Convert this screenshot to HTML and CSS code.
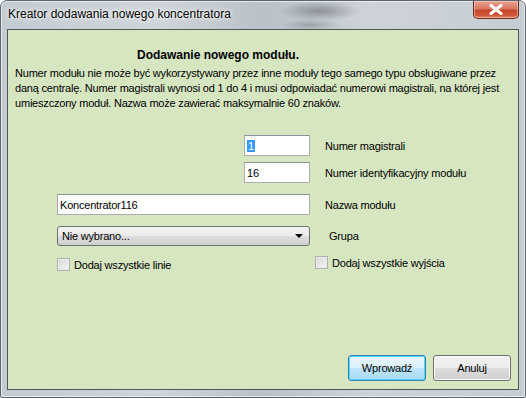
FILE: index.html
```html
<!DOCTYPE html>
<html lang="pl">
  <head>
    <meta charset="UTF-8" />
    <title>Kreator dodawania nowego koncentratora</title>
    <link rel="stylesheet" href="styles.css">
  </head>
  <body>
    <div class="window">
      <!-- Pasek tytułu -->
      <div class="titlebar">
        <span class="title">Kreator dodawania nowego koncentratora</span>
        <div class="close-btn">
          <svg width="14" height="11" viewBox="0 0 14 11">
            <path d="M2 1.5 L12 9.5 M12 1.5 L2 9.5" stroke="#fff" stroke-width="3" stroke-linecap="round" />
          </svg>
        </div>
      </div>

      <!-- Obszar klienta -->
      <div class="client">
        <h1 class="heading">Dodawanie nowego modułu.</h1>
        <p class="info">
          Numer modułu nie może być wykorzystywany przez inne moduły tego samego typu obsługiwane przez
          daną centralę. Numer magistrali wynosi od 1 do 4 i musi odpowiadać numerowi magistrali, na której jest
          umieszczony moduł. Nazwa może zawierać maksymalnie 60 znaków.
        </p>

        <div class="row row-first">
          <div class="field field-short"><span class="selected">1</span></div>
          <span class="label">Numer magistrali</span>
        </div>
        <div class="row">
          <div class="field field-short">16</div>
          <span class="label">Numer identyfikacyjny modułu</span>
        </div>
        <div class="row row-name">
          <div class="field field-long">Koncentrator116</div>
          <span class="label">Nazwa modułu</span>
        </div>
        <div class="row row-group">
          <div class="combo">
            <span>Nie wybrano...</span>
            <span class="arrow"></span>
          </div>
          <span class="label label-group">Grupa</span>
        </div>

        <div class="checks">
          <label class="check check-left"><span class="box"></span>Dodaj wszystkie linie</label>
          <label class="check"><span class="box"></span>Dodaj wszystkie wyjścia</label>
        </div>

        <div class="buttons">
          <button class="btn btn-default">Wprowadź</button>
          <button class="btn">Anuluj</button>
        </div>
      </div>
    </div>
  </body>
</html>
```

FILE: styles.css
```css
* {
  margin: 0;
  padding: 0;
  box-sizing: border-box;
}

body {
  width: 526px;
  height: 398px;
  overflow: hidden;
  background: #fff;
  font-family: "Liberation Sans", Arial, sans-serif;
  font-size: 11px;
  letter-spacing: -0.2px;
  color: #000;
}

/* Ramka okna w stylu Windows 7 (rozmyte tło szkła) */
.window {
  width: 526px;
  height: 398px;
  display: flex;
  flex-direction: column;
  padding: 0 6px 7px 6px;
  border: 1px solid #5d666e;
  border-radius: 7px 7px 2px 2px;
  background:
    radial-gradient(ellipse 40px 10px at 318px 10px, rgba(70, 75, 80, 0.45), transparent),
    radial-gradient(ellipse 30px 6px at 310px 24px, rgba(70, 75, 80, 0.3), transparent),
    linear-gradient(to right, #c3cbd2 0%, #cfd5da 30%, #b9c1c8 50%, #cdd3d8 70%, #c6cdd3 100%);
  box-shadow: inset 0 0 0 1px #e6eaee;
}

.titlebar {
  height: 28px;
  display: flex;
  align-items: flex-start;
  justify-content: space-between;
}

.title {
  font-size: 12px;
  letter-spacing: 0;
  margin: 6px 0 0 1px;
  text-shadow: 0 0 6px #fff, 0 0 3px #fff;
}

.close-btn {
  width: 46px;
  height: 18px;
  display: flex;
  align-items: center;
  justify-content: center;
  border: 1px solid #6b2a1e;
  border-top: none;
  border-radius: 0 0 5px 5px;
  background: linear-gradient(to bottom, #e8a493 0%, #d7775f 45%, #c6452b 55%, #d2583a 85%, #e48c6a 100%);
  box-shadow: inset 0 0 0 1px rgba(255, 220, 210, 0.5);
}

/* Zielony obszar z treścią */
.client {
  flex: 1;
  display: flex;
  flex-direction: column;
  background: #d6e6c0;
  border: 1px solid #4e565c;
  padding: 0 7px 8px 7px;
}

.heading {
  font-size: 12px;
  font-weight: bold;
  letter-spacing: 0;
  margin: 18px 0 0 122px;
  line-height: 14px;
}

.info {
  margin-top: 4px;
  line-height: 15px;
}

.row {
  display: flex;
  align-items: center;
  padding-left: 42px;
  margin-top: 6px;
}

.row-first {
  margin-top: 24px;
}

.row-name {
  margin-top: 11px;
}

.row-group {
  margin-top: 11px;
}

.field {
  height: 21px;
  background: #fff;
  border: 1px solid #abadb3;
  border-top-color: #8e9197;
  padding: 3px 2px;
  font-size: 11px;
  line-height: 14px;
}

.field-short {
  width: 66px;
  margin-left: 187px;
}

.field-long {
  width: 253px;
}

.selected {
  background: #3399ff;
  color: #fff;
  padding: 0 1px;
}

.label {
  margin-left: 15px;
}

.label-group {
  margin-left: 19px;
}

/* Lista rozwijana */
.combo {
  width: 253px;
  height: 20px;
  display: flex;
  align-items: center;
  justify-content: space-between;
  padding: 0 6px 0 4px;
  border: 1px solid #707070;
  border-radius: 3px;
  background: linear-gradient(to bottom, #f2f2f2 0%, #ebebeb 50%, #dddddd 51%, #cfcfcf 100%);
  font-size: 11px;
}

.arrow {
  width: 0;
  height: 0;
  border-left: 4px solid transparent;
  border-right: 4px solid transparent;
  border-top: 4px solid #000;
}

/* Pola wyboru */
.checks {
  display: flex;
  align-items: flex-start;
  padding-left: 42px;
  margin-top: 10px;
}

.check {
  display: flex;
  align-items: center;
  gap: 4px;
}

.check-left {
  width: 258px;
  margin-top: 2px;
}

.box {
  width: 13px;
  height: 13px;
  border: 1px solid #b1b1b1;
  background: linear-gradient(135deg, #d8d8d8 0%, #f4f4f4 100%);
  box-shadow: inset 0 0 0 1px #eaeaea;
}

/* Przyciski */
.buttons {
  margin-top: auto;
  display: flex;
  justify-content: flex-end;
  gap: 7px;
}

.btn {
  width: 78px;
  height: 26px;
  font-family: "Liberation Sans", Arial, sans-serif;
  font-size: 11px;
  letter-spacing: -0.2px;
  color: #000;
  border: 1px solid #707070;
  border-radius: 3px;
  background: linear-gradient(to bottom, #f2f2f2 0%, #ebebeb 50%, #dddddd 51%, #cfcfcf 100%);
  box-shadow: inset 0 0 0 1px #fcfcfc;
}

.btn-default {
  border-color: #3c7fb1;
  background: linear-gradient(to bottom, #eaf6fd 0%, #d9f0fc 50%, #bee6fd 51%, #a7d9f5 100%);
  box-shadow: inset 0 0 0 1px #48d8fb;
}
```
